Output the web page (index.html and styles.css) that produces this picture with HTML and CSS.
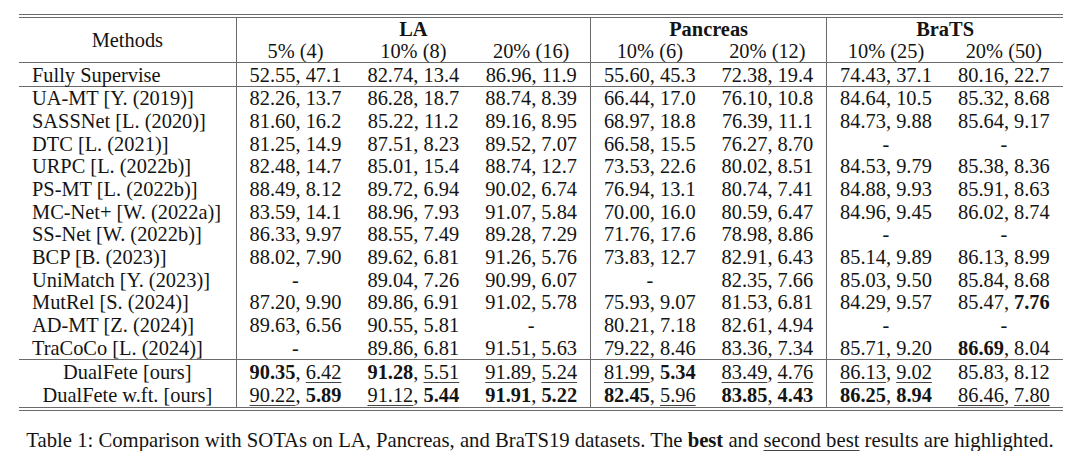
FILE: index.html
```html
<!DOCTYPE html>
<html>
<head>
<meta charset="utf-8">
<link rel="stylesheet" href="styles.css">
</head>
<body>
<div class="wrap">
  <div class="rule-double"></div>
  <table class="tbl">
    <colgroup>
      <col class="c-method">
      <col class="c-data"><col class="c-data"><col class="c-data">
      <col class="c-data"><col class="c-data">
      <col class="c-data"><col class="c-data">
    </colgroup>
    <thead>
      <tr class="h1">
        <th rowspan="2" class="method-h">Methods</th>
        <th colspan="3" class="grp vr">LA</th>
        <th colspan="2" class="grp vr">Pancreas</th>
        <th colspan="2" class="grp">BraTS</th>
      </tr>
      <tr class="h2">
        <th>5% (4)</th><th>10% (8)</th><th class="vr">20% (16)</th>
        <th>10% (6)</th><th class="vr">20% (12)</th>
        <th>10% (25)</th><th>20% (50)</th>
      </tr>
    </thead>
    <tbody class="sec1">
      <tr><td class="m">Fully Supervise</td><td>52.55, 47.1</td><td>82.74, 13.4</td><td class="vr">86.96, 11.9</td><td>55.60, 45.3</td><td class="vr">72.38, 19.4</td><td>74.43, 37.1</td><td>80.16, 22.7</td></tr>
    </tbody>
    <tbody class="sec2">
      <tr><td class="m">UA-MT [Y. (2019)]</td><td>82.26, 13.7</td><td>86.28, 18.7</td><td class="vr">88.74, 8.39</td><td>66.44, 17.0</td><td class="vr">76.10, 10.8</td><td>84.64, 10.5</td><td>85.32, 8.68</td></tr>
      <tr><td class="m">SASSNet [L. (2020)]</td><td>81.60, 16.2</td><td>85.22, 11.2</td><td class="vr">89.16, 8.95</td><td>68.97, 18.8</td><td class="vr">76.39, 11.1</td><td>84.73, 9.88</td><td>85.64, 9.17</td></tr>
      <tr><td class="m">DTC [L. (2021)]</td><td>81.25, 14.9</td><td>87.51, 8.23</td><td class="vr">89.52, 7.07</td><td>66.58, 15.5</td><td class="vr">76.27, 8.70</td><td>-</td><td>-</td></tr>
      <tr><td class="m">URPC [L. (2022b)]</td><td>82.48, 14.7</td><td>85.01, 15.4</td><td class="vr">88.74, 12.7</td><td>73.53, 22.6</td><td class="vr">80.02, 8.51</td><td>84.53, 9.79</td><td>85.38, 8.36</td></tr>
      <tr><td class="m">PS-MT [L. (2022b)]</td><td>88.49, 8.12</td><td>89.72, 6.94</td><td class="vr">90.02, 6.74</td><td>76.94, 13.1</td><td class="vr">80.74, 7.41</td><td>84.88, 9.93</td><td>85.91, 8.63</td></tr>
      <tr><td class="m">MC-Net+ [W. (2022a)]</td><td>83.59, 14.1</td><td>88.96, 7.93</td><td class="vr">91.07, 5.84</td><td>70.00, 16.0</td><td class="vr">80.59, 6.47</td><td>84.96, 9.45</td><td>86.02, 8.74</td></tr>
      <tr><td class="m">SS-Net [W. (2022b)]</td><td>86.33, 9.97</td><td>88.55, 7.49</td><td class="vr">89.28, 7.29</td><td>71.76, 17.6</td><td class="vr">78.98, 8.86</td><td>-</td><td>-</td></tr>
      <tr><td class="m">BCP [B. (2023)]</td><td>88.02, 7.90</td><td>89.62, 6.81</td><td class="vr">91.26, 5.76</td><td>73.83, 12.7</td><td class="vr">82.91, 6.43</td><td>85.14, 9.89</td><td>86.13, 8.99</td></tr>
      <tr><td class="m">UniMatch [Y. (2023)]</td><td>-</td><td>89.04, 7.26</td><td class="vr">90.99, 6.07</td><td>-</td><td class="vr">82.35, 7.66</td><td>85.03, 9.50</td><td>85.84, 8.68</td></tr>
      <tr><td class="m">MutRel [S. (2024)]</td><td>87.20, 9.90</td><td>89.86, 6.91</td><td class="vr">91.02, 5.78</td><td>75.93, 9.07</td><td class="vr">81.53, 6.81</td><td>84.29, 9.57</td><td>85.47, <b>7.76</b></td></tr>
      <tr><td class="m">AD-MT [Z. (2024)]</td><td>89.63, 6.56</td><td>90.55, 5.81</td><td class="vr">-</td><td>80.21, 7.18</td><td class="vr">82.61, 4.94</td><td>-</td><td>-</td></tr>
      <tr><td class="m">TraCoCo [L. (2024)]</td><td>-</td><td>89.86, 6.81</td><td class="vr">91.51, 5.63</td><td>79.22, 8.46</td><td class="vr">83.36, 7.34</td><td>85.71, 9.20</td><td><b>86.69</b>, 8.04</td></tr>
    </tbody>
    <tbody class="sec3">
      <tr><td class="mc">DualFete [ours]</td><td><b>90.35</b>, <u>6.42</u></td><td><b>91.28</b>, <u>5.51</u></td><td class="vr"><u>91.89</u>, <u>5.24</u></td><td><u>81.99</u>, <b>5.34</b></td><td class="vr"><u>83.49</u>, <u>4.76</u></td><td><u>86.13</u>, <u>9.02</u></td><td>85.83, 8.12</td></tr>
      <tr><td class="mc">DualFete w.ft. [ours]</td><td><u>90.22</u>, <b>5.89</b></td><td><u>91.12</u>, <b>5.44</b></td><td class="vr"><b>91.91</b>, <b>5.22</b></td><td><b>82.45</b>, <u>5.96</u></td><td class="vr"><b>83.85</b>, <b>4.43</b></td><td><b>86.25</b>, <b>8.94</b></td><td><u>86.46</u>, <u>7.80</u></td></tr>
    </tbody>
  </table>
  <div class="rule-double"></div>
  <p class="caption">Table 1: Comparison with SOTAs on LA, Pancreas, and BraTS19 datasets. The <b>best</b> and <u>second best</u> results are highlighted.</p>
</div>
</body>
</html>
```

FILE: styles.css
```css
html, body {
  margin: 0;
  padding: 0;
  background: #ffffff;
}
body {
  font-family: "Liberation Serif", "Times New Roman", serif;
  font-size: 20.4px;
  color: #141414;
}
.wrap {
  padding-top: 14px;
  width: 1080px;
}
.rule-double {
  margin-left: 19px;
  width: 1044px;
  height: 2px;
  border-top: 1px solid #6a6a6a;
  border-bottom: 1px solid #6a6a6a;
}
.tbl {
  margin-left: 19px;
  width: 1044px;
  table-layout: fixed;
  border-collapse: collapse;
  border-spacing: 0;
}
.c-method { width: 217px; }
.c-data { width: 118px; }
.tbl th, .tbl td {
  padding: 0;
  text-align: center;
  white-space: nowrap;
  font-weight: normal;
  line-height: 20px;
  vertical-align: middle;
}
.tbl th.grp { font-weight: bold; }
.tbl th.method-h {
  border-right: 1px solid #6a6a6a;
  border-bottom: 1px solid #6a6a6a;
}
.h1 th { height: 22px; }
.h2 th { height: 22px; border-bottom: 1px solid #6a6a6a; }
.vr { border-right: 1px solid #6a6a6a; }
.tbl td.m {
  text-align: left;
  padding-left: 13px;
  border-right: 1px solid #6a6a6a;
}
.tbl td.mc {
  border-right: 1px solid #6a6a6a;
}
.tbl td { height: 22.67px; }
.sec1 td { height: 23px; border-bottom: 1px solid #6a6a6a; }
.sec2 tr:last-child td { border-bottom: 1px solid #6a6a6a; }
.sec3 td { height: 23.5px; }
b { font-weight: bold; }
u {
  text-decoration: underline;
  text-decoration-thickness: 1px;
  text-underline-offset: 3px;
  text-decoration-color: #444;
}
.caption {
  margin: 18px 0 0 0;
  text-align: center;
  font-size: 20.7px;
  line-height: 22px;
}
```
